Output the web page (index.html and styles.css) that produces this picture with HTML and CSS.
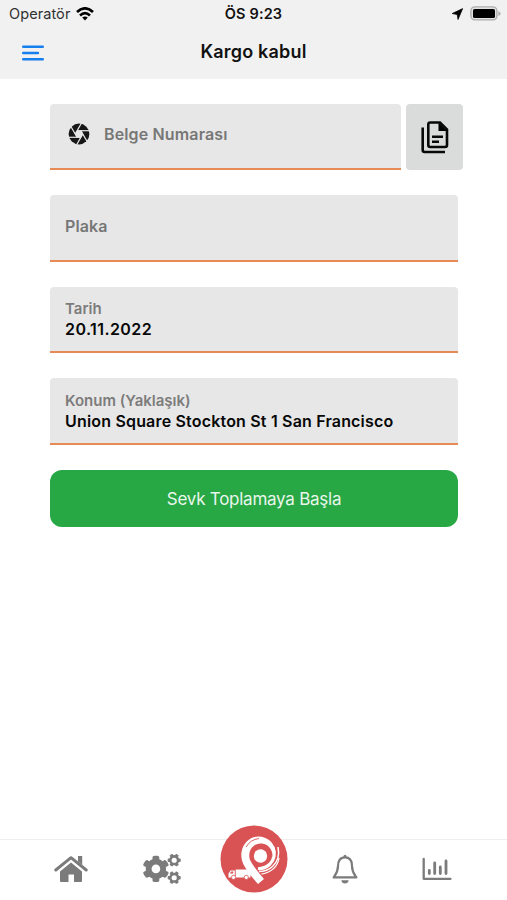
FILE: index.html
```html
<!DOCTYPE html>
<html lang="tr">
<head>
<meta charset="utf-8">
<title>Kargo kabul</title>
<link rel="stylesheet" href="styles.css">
</head>
<body>
<div class="app">
  <header class="header">
    <div class="status">
      <div class="carrier"><span class="carrier-name">Operatör</span>
        <svg width="18" height="14" viewBox="0 0 18 14"><g fill="none" stroke="#000" stroke-width="2.7"><path d="M1 5.1Q9-2.4 17 5.1"/><path d="M4 8.4Q9 3.9 14 8.4"/></g><path d="M6.2 10.6Q9 8.4 11.8 10.6L9 13.6Z"/></svg>
      </div>
      <div class="clock">ÖS 9:23</div>
      <div class="power">
        <svg width="11" height="12" viewBox="0 0 11 12"><path d="M10.7.6 6 11.5 5.2 6.6.2 5.5Z" stroke="#000" stroke-width=".7" stroke-linejoin="round"/></svg>
        <svg width="31" height="15" viewBox="0 0 31 15"><rect x=".9" y=".9" width="26" height="13" rx="4" fill="#e2e2e2" stroke="#adadad" stroke-width="1.4"/><rect x="3" y="3" width="22" height="9" rx="1.6"/><path d="M28.4 5v5q2.2-1 2.2-2.5T28.4 5Z" fill="#adadad"/></svg>
      </div>
    </div>
    <div class="titlebar">
      <svg class="menu" width="22" height="16" viewBox="0 0 22 16"><path d="M1.2 1.8H20.8M1.2 8H16M1.2 14.2H20.8" stroke="#167fee" stroke-width="2.4" stroke-linecap="round"/></svg>
      <h1 class="title">Kargo kabul</h1>
    </div>
  </header>

  <main class="form">
    <div class="row">
      <div class="field document">
        <svg width="22" height="22" viewBox="-11 -11 22 22"><circle r="10.4" fill="#171717"/><g stroke="#e7e7e7" stroke-width="1.2"><path id="blade" d="M2 3.3H-10.5"/><use href="#blade" transform="rotate(60)"/><use href="#blade" transform="rotate(120)"/><use href="#blade" transform="rotate(180)"/><use href="#blade" transform="rotate(240)"/><use href="#blade" transform="rotate(300)"/></g><path d="M-2-3.5H2L4 0 2 3.5H-2L-4 0Z" fill="#e7e7e7"/></svg>
        <span class="label number-label">Belge Numarası</span>
      </div>
      <div class="copy">
        <svg width="28" height="33" viewBox="0 0 28 33"><path d="M9.3 1.5H19L26 8.5V24Q26 26 24 26H9.3Q7.3 26 7.3 24V3.5Q7.3 1.5 9.3 1.5Z" fill="none" stroke="#080808" stroke-width="2.6"/><path d="M17.5 1.5V10H26Z"/><path d="M1.7 6.5V29Q1.7 31 3.7 31H24M11 15.7H22M11 20.8H18" fill="none" stroke="#080808" stroke-width="2.6"/></svg>
      </div>
    </div>
    <div class="field"><span class="label plate-label">Plaka</span></div>
    <div class="field filled"><span class="caption date-label">Tarih</span><span class="value date">20.11.2022</span></div>
    <div class="field filled"><span class="caption place-label">Konum (Yaklaşık)</span><span class="value place">Union Square Stockton St 1 San Francisco</span></div>
    <div class="start"><span>Sevk Toplamaya Başla</span></div>
  </main>

  <nav class="tabs">
    <div class="tab"><svg width="34" height="28" viewBox="0 0 34 28"><path d="M1.8 15 17 2.7 32.2 15" fill="none" stroke="#7b7b7b" stroke-width="3" stroke-linecap="round" stroke-linejoin="round"/><path d="M24 1H28.2V10L24 6.5ZM17 7.6 28 16.5V26Q28 27 27 27H20V19.5H14.5V27H7Q6 27 6 26V16.5Z" fill="#7b7b7b"/></svg></div>
    <div class="tab"><svg width="38" height="30" viewBox="0 0 640 512"><g fill="#7b7b7b" fill-rule="evenodd"><path id="cog" d="M512.1 191l-8.2 14.3c-3 5.3-9.4 7.5-15.1 5.4-11.8-4.4-22.6-10.7-32.1-18.6-4.6-3.8-5.8-10.5-2.8-15.7l8.2-14.3c-6.9-8-12.3-17.3-15.9-27.4h-16.5c-6 0-11.2-4.3-12.2-10.3-2-12-2.1-24.6 0-37.1 1-6 6.2-10.4 12.2-10.4h16.5c3.6-10.1 9-19.4 15.9-27.4l-8.2-14.3c-3-5.2-1.9-11.9 2.8-15.7 9.5-7.9 20.4-14.2 32.1-18.6 5.7-2.1 12.1.1 15.1 5.4l8.2 14.3c10.5-1.9 21.2-1.9 31.7 0L552 6.3c3-5.3 9.4-7.5 15.1-5.4 11.8 4.4 22.6 10.7 32.1 18.6 4.6 3.8 5.8 10.5 2.8 15.7l-8.2 14.3c6.9 8 12.3 17.3 15.9 27.4h16.5c6 0 11.2 4.3 12.2 10.3 2 12 2.1 24.6 0 37.1-1 6-6.2 10.4-12.2 10.4h-16.5c-3.6 10.1-9 19.4-15.9 27.4l8.2 14.3c3 5.2 1.9 11.9-2.8 15.7-9.5 7.9-20.4 14.2-32.1 18.6-5.7 2.1-12.1-.1-15.1-5.4l-8.2-14.3c-10.4 1.9-21.2 1.9-31.7 0zM572 106a44 44 0 1 0-88 0 44 44 0 1 0 88 0z"/><use href="#cog" y="299"/><path d="M386.3 286.1l33.7 16.8c10.1 5.8 14.5 18.1 10.5 29.1-8.9 24.2-26.4 46.4-42.6 65.8-7.4 8.9-20.2 11.1-30.3 5.3l-29.1-16.8c-16 13.7-34.6 24.6-54.9 31.7v33.6c0 11.6-8.3 21.6-19.7 23.6-24.6 4.2-50.4 4.4-75.9 0-11.5-2-20-11.9-20-23.6V418c-20.3-7.2-38.9-18-54.9-31.7L74 403c-10 5.8-22.9 3.6-30.3-5.3-16.2-19.4-33.3-41.6-42.2-65.7-4-10.9.4-23.2 10.5-29.1l33.3-16.8c-3.9-20.9-3.9-42.4 0-63.4L12 205.8c-10.1-5.8-14.6-18.1-10.5-29 8.9-24.2 26-46.4 42.2-65.8 7.4-8.9 20.2-11.1 30.3-5.3l29.1 16.8c16-13.7 34.6-24.6 54.9-31.7V57.1c0-11.5 8.2-21.5 19.6-23.5 24.6-4.2 50.5-4.4 76-.1 11.5 2 20 11.9 20 23.6v33.6c20.3 7.2 38.9 18 54.9 31.7l29.1-16.8c10-5.8 22.9-3.6 30.3 5.3 16.2 19.4 33.2 41.6 42.1 65.8 4 10.9.1 23.2-10 29.1l-33.7 16.8c3.9 21 3.9 42.5 0 63.5zM290 254a74 74 0 1 0-148 0 74 74 0 1 0 148 0z"/></g></svg></div>
    <div class="tab center"><svg class="logo" width="68" height="68" viewBox="0 0 68 68"><circle cx="34" cy="34" r="33.5" fill="#d95355"/><path d="M38 59Q28 48 23.5 39.5C18.5 29 22.5 18 31 13.2C42 8 54.5 15 55.5 27L53 30C51 21 45.5 18 40.5 18.5C31.5 19 27.5 27.5 30 35Q33.5 42 44 54Z" fill="#fff"/><path d="M26 22Q30.5 14.5 39 13.5" fill="none" stroke="#d95355" stroke-width=".9"/><path d="M53 22Q56.5 32 50 39Q45 44 38 43.5" fill="none" stroke="#fff" stroke-width="3.2"/><path d="M58 22Q60.5 34 52.5 41.5Q47 46.5 39 46.5" fill="none" stroke="#fff" stroke-width="1.5"/><path d="M59 33Q57 46 41.5 49.2" fill="none" stroke="#fff" stroke-width="1.3"/><circle cx="40.5" cy="31" r="10" fill="#d95355"/><circle cx="40.5" cy="31" r="6.7" fill="#fff"/><path d="M15.7 44.5H30.5V52.5H8.5V48.5L10.5 45.5H14.8V51H15.7Z" fill="#fff"/><path d="M9.8 48.6 11.3 46.6H13.2V48.6Z" fill="#d95355"/><g fill="#fff" stroke="#d95355" stroke-width=".8"><circle cx="13.5" cy="52.4" r="2.1"/><circle cx="26.3" cy="52.4" r="2.1"/></g></svg></div>
    <div class="tab"><svg width="26" height="30" viewBox="0 0 26 30"><path d="M13 3.4C7.5 3.4 6 8 6 12C6 18 3.7 20.5 1.6 23.4H24.4C22.3 20.5 20 18 20 12C20 8 18.5 3.4 13 3.4Z" fill="none" stroke="#7b7b7b" stroke-width="2.2" stroke-linejoin="round"/><path d="M11.5 3.5V2.2a1.5 1.5 0 0 1 3 0V3.5ZM9.3 26.2H16.7Q16 29.5 13 29.5T9.3 26.2Z" fill="#7b7b7b"/></svg></div>
    <div class="tab"><svg width="30" height="24" viewBox="0 0 30 24"><path d="M1.7 2V21.8H28.5" fill="none" stroke="#7b7b7b" stroke-width="2.3" stroke-linecap="round" stroke-linejoin="round"/><path d="M7.3 13.5V16.5M12.7 6V16.5M18.3 10V16.5M24 4V16.5" stroke="#7b7b7b" stroke-width="2.8" stroke-linecap="round"/></svg></div>
  </nav>
</div>
</body>
</html>
```
FILE: styles.css
```css
* { box-sizing: border-box; }
body { margin: 0; background: #fff; font-family: Inter, "Liberation Sans", sans-serif; color: #111; }
svg { display: block; flex: none; }
.app { height: 900px; display: flex; flex-direction: column; overflow: hidden; }
.header { height: 78.5px; background: #f1f1f1; }
.status { height: 27px; padding: 0 8px 0 9px; display: grid; grid-template-columns: 1fr auto 1fr; align-items: center; font-size: 14.5px; }
.carrier { display: flex; align-items: center; gap: 6px; color: #303030; }
.carrier-name { letter-spacing: .08px; }
.clock { font-weight: 600; letter-spacing: .15px; margin-right: 1px; }
.power { display: flex; justify-content: flex-end; align-items: center; gap: 7px; margin-right: -2px; }
.titlebar { height: 51px; padding: 0 22px; display: grid; grid-template-columns: 1fr auto 1fr; align-items: center; }
.title { margin: 0; font-size: 18px; line-height: 22px; font-weight: 600; letter-spacing: .19px; padding-bottom: 1px; }
.form { flex: 1; padding: 25px 49px 0 50px; display: flex; flex-direction: column; gap: 25px; }
.row { display: flex; gap: 5px; width: 413px; }
.field { width: 408px; height: 66.6px; padding: 0 15px 3.5px; background: #e7e7e7; border-bottom: 2px solid #e68b55; border-radius: 4px 4px 0 0; display: flex; align-items: center; }
.document { width: 351px; padding: 0 18px 3.5px; gap: 14px; }
.filled { flex-direction: column; align-items: flex-start; justify-content: center; padding: 1.6px 15px 0; }
.label { font-size: 16px; font-weight: 600; color: #777; }
.number-label { letter-spacing: .14px; }
.plate-label { letter-spacing: .1px; }
.caption { font-size: 15px; line-height: 20px; font-weight: 600; color: #7c7c7c; }
.value { font-size: 16px; line-height: 21px; font-weight: 600; color: #080808; white-space: nowrap; }
.date { letter-spacing: .42px; }
.place { letter-spacing: .18px; }
.copy { width: 57px; height: 66.6px; padding-top: 1px; background: #d9dcdb; border-radius: 4px; display: flex; align-items: center; justify-content: center; }
.start { width: 408px; height: 57px; padding-top: 1px; background: #28a745; border-radius: 12px; color: #e9f6ec; font-size: 17px; letter-spacing: -.25px; display: flex; align-items: center; justify-content: center; }
.tabs { height: 61px; border-top: 1px solid #eee; padding: 0 24.5px 2px 25px; display: grid; grid-template-columns: repeat(5, 1fr); }
.tab { display: flex; align-items: center; justify-content: center; }
.center { align-items: flex-start; }
.logo { margin-top: -15px; }
```
